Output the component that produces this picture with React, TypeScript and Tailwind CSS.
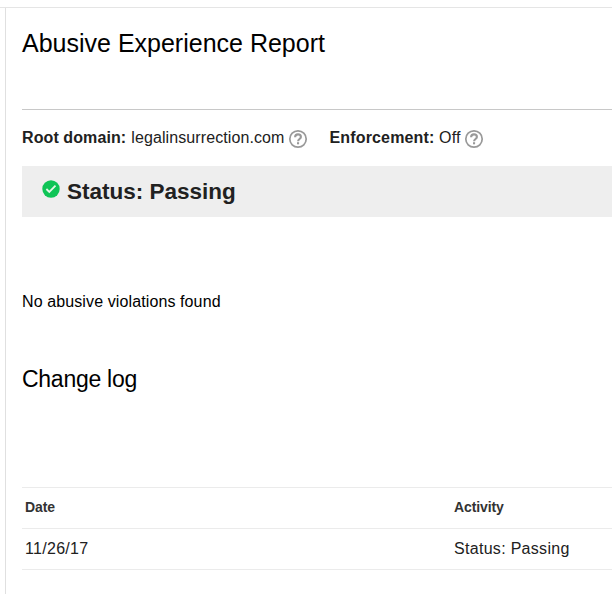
const changes = [{ date: "11/26/17", activity: "Status: Passing" }];

function HelpIcon() {
  return (
    <svg className="mt-px ml-[3px] size-5 shrink-0" viewBox="0 0 20 20" fill="none">
      <circle cx="10" cy="10" r="8.2" stroke="#999999" strokeWidth="1.7" />
      <path
        d="M7.1 8.2c0-1.8 1.2-2.8 2.9-2.8s2.9 1 2.9 2.5c0 2.1-2.8 2.1-2.8 4.3"
        stroke="#999999"
        strokeWidth="2.1"
      />
      <path d="M9 13.2h2.1v2.1H9z" fill="#999999" />
    </svg>
  );
}

function StatusIcon() {
  return (
    <svg className="mr-[7px] -mt-[5px] size-[18px]" viewBox="0 0 18 18" fill="none">
      <circle cx="9" cy="9" r="8.7" fill="#0fc456" />
      <path d="M4.4 9l2.9 2.9 6.2-6.2" stroke="#e4f8e9" strokeWidth="1.8" />
    </svg>
  );
}

export default function App() {
  return (
    <div className="flex h-[594px] w-full flex-col overflow-hidden bg-white pt-[7px] font-['Liberation_Sans',Arial,sans-serif] text-[#212121]">
      <div className="flex flex-1 flex-col border-t border-[#e5e5e5]">
        <main className="ml-[5px] flex-1 border-l border-[#e0e0e0] pl-4">
          <h1 className="mt-[19px] h-[83px] border-b border-[#c8c8c8] text-[25px] leading-8 text-black">
            Abusive Experience Report
          </h1>
          <div className="mt-[18px] flex h-5 items-center text-base whitespace-nowrap">
            <p className="tracking-[0.1px]">
              <strong className="mr-[0.4px]">Root domain:</strong> legalinsurrection.com
            </p>
            <HelpIcon />
            <p className="ml-[22px] tracking-[0.15px]">
              <strong>Enforcement:</strong> Off
            </p>
            <HelpIcon />
          </div>
          <div className="mt-[18px] flex h-[51px] items-center bg-[#eeeeee] pl-5">
            <StatusIcon />
            <h2 className="text-[22.5px] font-bold">Status: Passing</h2>
          </div>
          <p className="mt-[73px] text-base tracking-[0.11px] text-black">
            No abusive violations found
          </p>
          <h2 className="mt-[49px] text-[23px] leading-8 tracking-[-0.27px] text-black">Change log</h2>
          <table className="mt-[92px] w-full table-fixed border-collapse text-left">
            <thead>
              <tr className="h-[41px] border-y border-[#ebebeb] text-sm tracking-[-0.1px] text-[#333333]">
                <th className="w-[429px] pb-0.5 pl-[3px]">Date</th>
                <th className="pb-0.5 pl-[3px]">Activity</th>
              </tr>
            </thead>
            <tbody>
              {changes.map((change) => (
                <tr key={change.date} className="h-[41px] border-b border-[#ebebeb] tracking-[0.3px]">
                  <td className="pl-[3px]">{change.date}</td>
                  <td className="pl-[3px]">{change.activity}</td>
                </tr>
              ))}
            </tbody>
          </table>
        </main>
      </div>
    </div>
  );
}
